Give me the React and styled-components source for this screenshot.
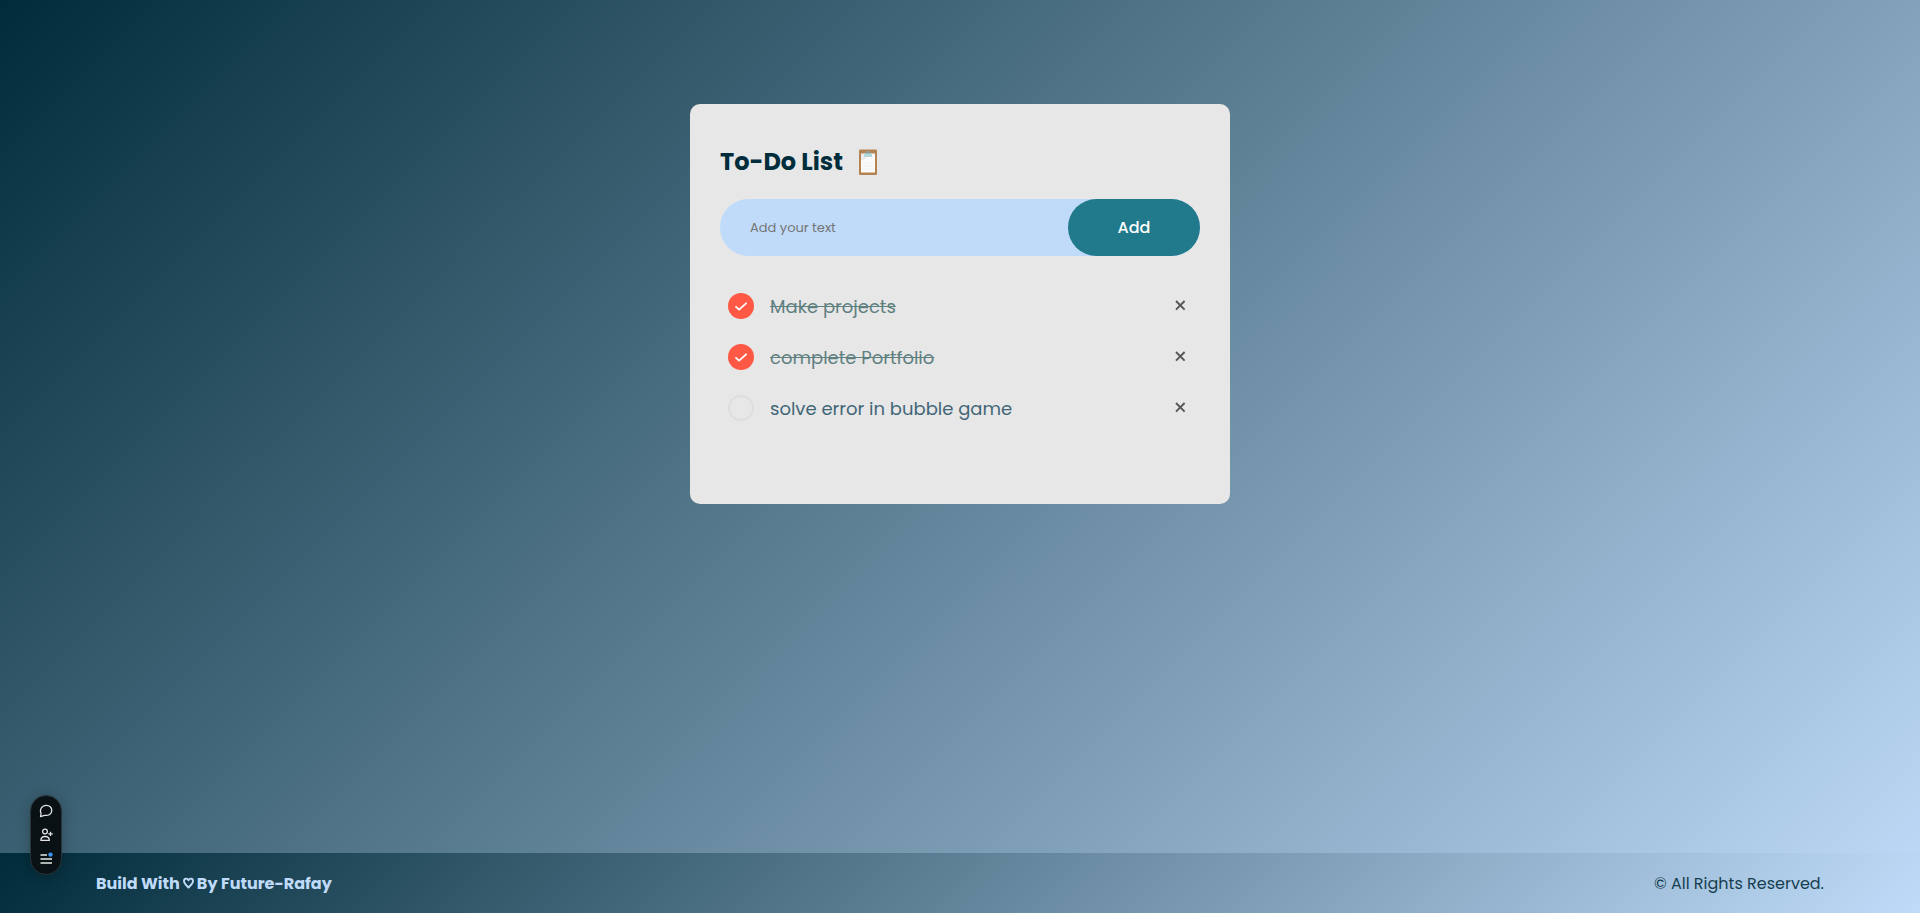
import React, { useState } from "react";
import styled, { createGlobalStyle } from "styled-components";

const GlobalStyle = createGlobalStyle`
  * { box-sizing: border-box; margin: 0; padding: 0; }
  body, button, input {
    font-family: Poppins, Inter, "Open Sans", sans-serif;
  }
`;

const Page = styled.div`
  min-height: 100vh;
  display: flex;
  flex-direction: column;
  background: linear-gradient(135deg, #002b3a, #4e7185 40%, #bfdbf9);
`;

const Main = styled.main`
  flex: 1;
  padding: 104px 20px 40px;
`;

const Card = styled.section`
  width: 100%;
  max-width: 540px;
  margin: 0 auto;
  padding: 40px 30px 70px;
  border-radius: 10px;
  background: #e7e7e7;
`;

const Title = styled.h1`
  display: flex;
  align-items: center;
  gap: 10px;
  height: 35px;
  margin-bottom: 20px;
  font-size: 24px;
  font-weight: 700;
  color: #002d3c;
`;

const Form = styled.form`
  display: flex;
  height: 57px;
  margin-bottom: 25px;
  border-radius: 30px;
  background: #bfdbf9;
`;

const TextInput = styled.input`
  flex: 1;
  min-width: 0;
  padding: 0 30px;
  border: 0;
  outline: 0;
  background: transparent;
  font-size: 13px;
  &::placeholder { color: #757575; }
`;

const AddButton = styled.button`
  width: 132px;
  border: 0;
  border-radius: 30px;
  background: #207a8b;
  color: #fff;
  font-size: 16px;
  font-weight: 500;
  cursor: pointer;
`;

const List = styled.ul`
  list-style: none;
`;

const Item = styled.li`
  display: flex;
  align-items: center;
  height: 51px;
  padding: 0 10px 0 8px;
`;

const TaskLabel = styled.label`
  flex: 1;
  display: flex;
  align-items: center;
  gap: 16px;
  font-size: 18px;
  color: ${(p) => (p.$done ? "#5f8080" : "#426678")};
  text-decoration: ${(p) => (p.$done ? "line-through" : "none")};
  cursor: pointer;
`;

const Tick = styled.input`
  appearance: none;
  width: 26px;
  height: 26px;
  margin-bottom: 2px;
  border: 2px solid #dedede;
  border-radius: 50%;
  cursor: pointer;
  &:checked {
    border: 0;
    background: #ff5945 url("data:image/svg+xml,%3Csvg xmlns='http://www.w3.org/2000/svg' width='26' height='26' fill='none' stroke='white' stroke-width='1.8' stroke-linecap='round' stroke-linejoin='round'%3E%3Cpath d='M8 13.8l3.1 2.8 7-6.3'/%3E%3C/svg%3E") center no-repeat;
  }
`;

const RemoveButton = styled.button`
  display: flex;
  padding: 4px;
  margin-bottom: 2px;
  border: 0;
  background: transparent;
  color: #555;
  cursor: pointer;
`;

const Footer = styled.footer`
  display: flex;
  align-items: center;
  justify-content: space-between;
  height: 60px;
  padding: 0 5%;
  background: linear-gradient(135deg, #002b3a, #4e7185 40%, #bfdbf9);
  font-size: 16px;
  color: #173f50;
`;

const Credit = styled.p`
  display: flex;
  align-items: center;
  gap: 3px;
  font-weight: 700;
  color: #bfdbf9;
`;

const Toolbar = styled.nav`
  position: fixed;
  left: 30px;
  bottom: 38px;
  display: flex;
  flex-direction: column;
  align-items: center;
  justify-content: space-between;
  width: 32px;
  height: 80px;
  padding: 8px 0;
  border: 1px solid #28363c;
  border-radius: 16px;
  background: #091114;
  box-shadow: 0 2px 14px rgba(0, 0, 0, 0.25);
`;

const ToolButton = styled.button`
  display: flex;
  border: 0;
  background: transparent;
  color: #e4e4e4;
  cursor: pointer;
`;

function Clipboard() {
  return (
    <svg width="30" height="30" viewBox="0 0 30 30" aria-hidden="true">
      <rect x="6" y="2.5" width="18" height="25.5" rx="1" fill="#b58352" />
      <path d="M8 6.5h14v19H8z" fill="#fafafa" />
      <path d="M8 7h8l-5 6H8z" fill="#ececec" />
      <path d="M10 16h10M10 19h10M10 22h10" stroke="#f0f0f0" />
      <path d="M11 6h2l1-2h2l1 2h2v4h-8z" fill="#b4d9dc" />
      <path d="M12 6.5l2-2.5h2l2 2.5z" fill="#8b9d91" />
    </svg>
  );
}

function Heart() {
  return (
    <svg width="11" height="12" viewBox="0 0 11 12" fill="none" stroke="currentColor" strokeWidth="1.9" strokeLinejoin="round" role="img" aria-label="love">
      <path d="M5.5 10.5C3.5 8.6 1 6.5 1 4.1 1 1.2 4.3.9 5.5 3.2 6.7.9 10 1.2 10 4.1c0 2.4-2.5 4.5-4.5 6.4z" />
    </svg>
  );
}

function Cross() {
  return (
    <svg width="11" height="11" viewBox="0 0 11 11" stroke="currentColor" strokeWidth="1.9" aria-hidden="true">
      <path d="M1 1l8.6 8.6M9.6 1L1 9.6" />
    </svg>
  );
}

const iconProps = { width: 14, height: 14, viewBox: "0 0 14 14", fill: "none", stroke: "currentColor", strokeWidth: 1.3, strokeLinejoin: "round", "aria-hidden": true };

const initialTasks = [
  { id: 1, text: "Make projects", done: true },
  { id: 2, text: "complete Portfolio", done: true },
  { id: 3, text: "solve error in bubble game", done: false },
];

export default function App() {
  const [tasks, setTasks] = useState(initialTasks);
  const [draft, setDraft] = useState("");

  const addTask = (event) => {
    event.preventDefault();
    if (!draft.trim()) return;
    setTasks([...tasks, { id: Date.now(), text: draft, done: false }]);
    setDraft("");
  };
  const toggle = (id) => setTasks(tasks.map((t) => (t.id === id ? { ...t, done: !t.done } : t)));
  const remove = (id) => setTasks(tasks.filter((t) => t.id !== id));

  return (
    <Page>
      <GlobalStyle />
      <Main>
        <Card>
          <Title>
            To-Do List
            <Clipboard />
          </Title>
          <Form onSubmit={addTask}>
            <TextInput aria-label="New task" placeholder="Add your text" value={draft} onChange={(e) => setDraft(e.target.value)} />
            <AddButton type="submit">Add</AddButton>
          </Form>
          <List>
            {tasks.map((task) => (
              <Item key={task.id}>
                <TaskLabel $done={task.done}>
                  <Tick type="checkbox" checked={task.done} onChange={() => toggle(task.id)} />
                  {task.text}
                </TaskLabel>
                <RemoveButton type="button" aria-label={`Remove ${task.text}`} onClick={() => remove(task.id)}>
                  <Cross />
                </RemoveButton>
              </Item>
            ))}
          </List>
        </Card>
      </Main>
      <Footer>
        <Credit>
          Build With <Heart /> By Future-Rafay
        </Credit>
        <p>© All Rights Reserved.</p>
      </Footer>
      <Toolbar aria-label="Page tools">
        <ToolButton type="button" aria-label="Comment">
          <svg {...iconProps}>
            <path d="M1.5 12.6l.6-3.1C.2 5.6 3 1.3 7.3 1.3c3.2 0 5.5 2.2 5.5 5.1 0 3.4-3.3 5.7-7.3 4.9z" />
          </svg>
        </ToolButton>
        <ToolButton type="button" aria-label="Invite">
          <svg {...iconProps}>
            <circle cx="6" cy="3.5" r="2.4" />
            <path d="M1.9 12.4c0-5.2 8.4-5.2 8.4 0zM11.5 3.7v4.4M9.3 5.9h4.4" />
          </svg>
        </ToolButton>
        <ToolButton type="button" aria-label="Menu">
          <svg {...iconProps}>
            <path d="M1.5 3h6.5M1.5 7h11.5M1.5 11h11.5" stroke="#aeb4b0" strokeWidth="1.9" />
            <circle cx="11.5" cy="2.6" r="2.2" fill="#3d94f6" stroke="none" />
          </svg>
        </ToolButton>
      </Toolbar>
    </Page>
  );
}
